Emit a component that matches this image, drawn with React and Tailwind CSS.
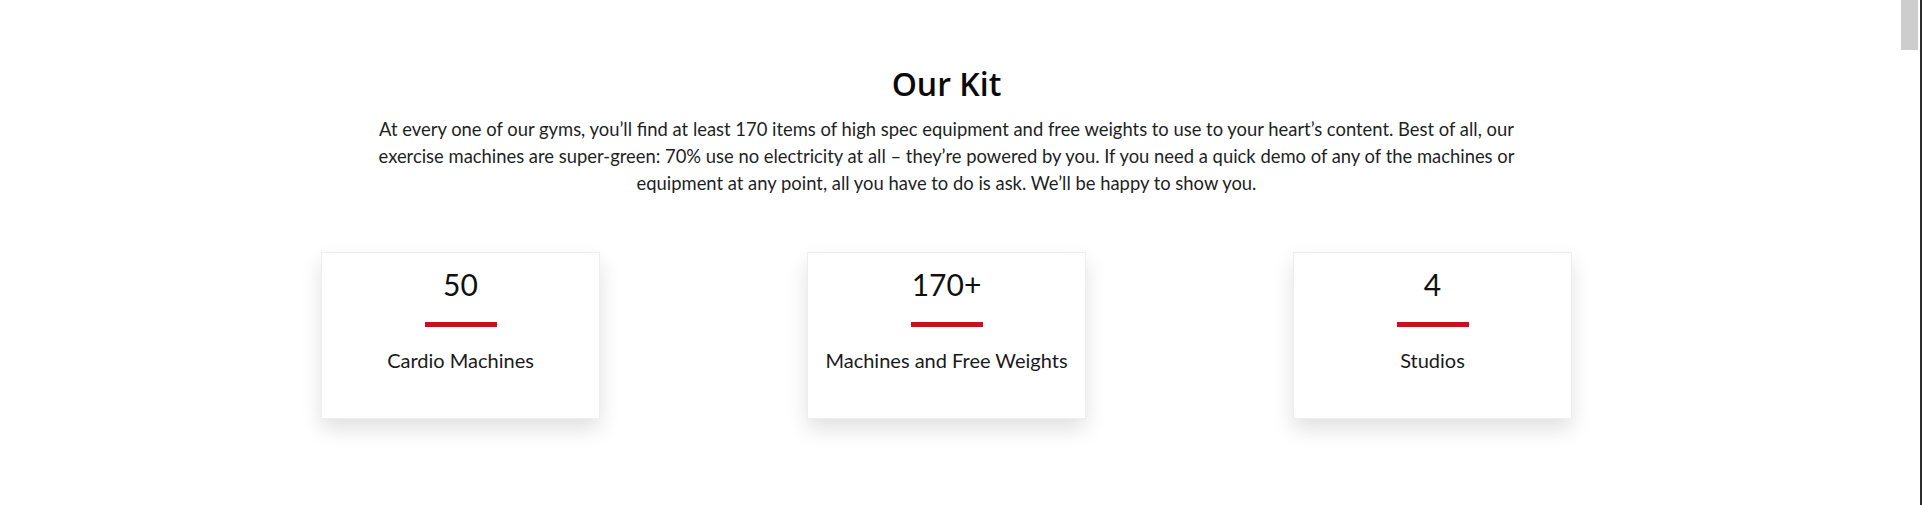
const stats = [
  { value: '50', label: 'Cardio Machines' },
  { value: '170+', label: 'Machines and Free Weights' },
  { value: '4', label: 'Studios' },
];

function StatCard({ value, label }) {
  return (
    <div className="w-[486px] flex justify-center">
      <div className="w-[279px] h-[167px] bg-white border border-[#eeeeee] shadow-[0_10px_20px_rgba(0,0,0,0.12)] flex flex-col items-center pt-[13px]">
        <div className="text-[30px] leading-[36px] text-[#111111]">{value}</div>
        <div className="w-[72px] h-[5px] bg-[#c8101e] mt-[20px]"></div>
        <div className="text-[20px] leading-[28px] text-[#1a1a1a] mt-[19px]">{label}</div>
      </div>
    </div>
  );
}

export default function App() {
  return (
    <div className="h-[505px] flex bg-white font-['Lato','Open_Sans',sans-serif] overflow-hidden">
      <main className="w-[1893px] flex flex-col items-center pt-[64px]">
        <h2 className="font-['Open_Sans',sans-serif] font-semibold text-[32px] leading-[40px] text-[#0a0a0a]">Our Kit</h2>
        <p className="mt-[12px] text-[18.4px] leading-[27px] text-center text-[#1f1f1f]">
          At every one of our gyms, you’ll find at least 170 items of high spec equipment and free weights to use to your heart’s content. Best of all, our
          <br />
          exercise machines are super-green: 70% use no electricity at all – they’re powered by you. If you need a quick demo of any of the machines or
          <br />
          equipment at any point, all you have to do is ask. We’ll be happy to show you.
        </p>
        <div className="flex mt-[55px]">
          {stats.map((s) => (
            <StatCard key={s.label} value={s.value} label={s.label} />
          ))}
        </div>
      </main>
      <div className="w-[8px]"></div>
      <div className="w-[17px]">
        <div className="h-[50px] bg-[#cdcdcd]"></div>
      </div>
      <div className="w-[2px]"></div>
      <div className="w-[2px] bg-[#2d2d2d]"></div>
    </div>
  );
}
